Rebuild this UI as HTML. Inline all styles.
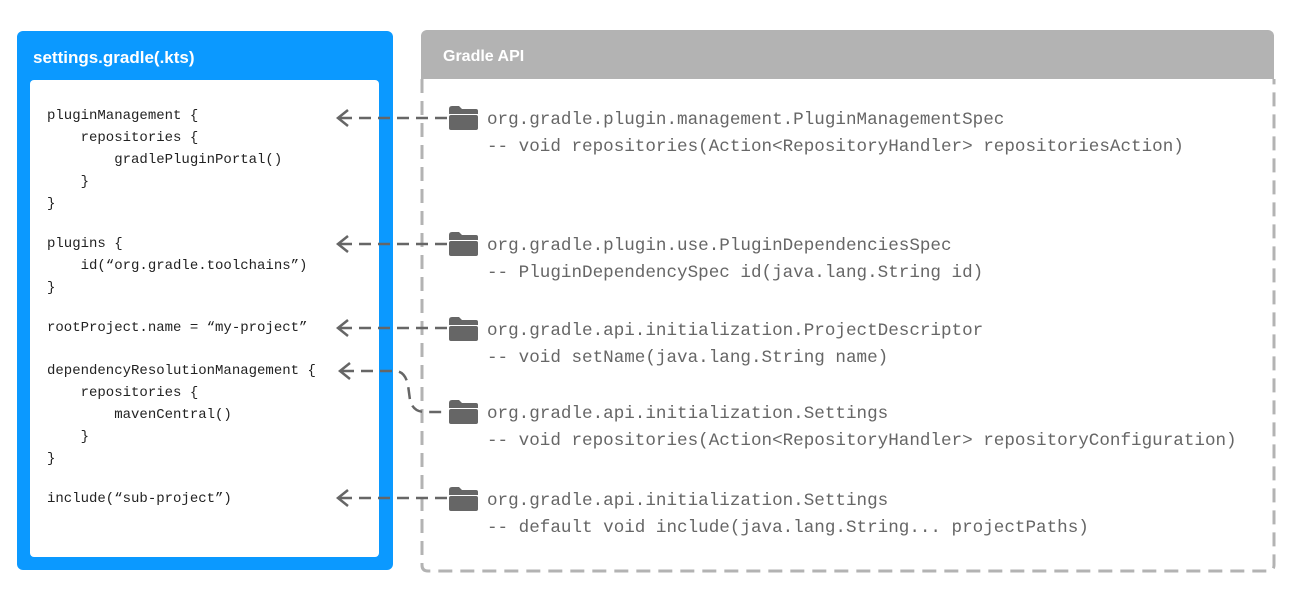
<!DOCTYPE html>
<html><head><meta charset="utf-8"><style>
body{margin:0;width:1290px;height:592px;background:#fff;position:relative;overflow:hidden;font-family:"Liberation Sans",sans-serif}
.blue{position:absolute;left:17px;top:31px;width:376px;height:539px;background:#0b99ff;border-radius:6px}
.blue h1{position:absolute;left:16px;top:17px;margin:0;font-size:17px;font-weight:bold;color:#fff}
.inner{position:absolute;left:30px;top:80px;width:349px;height:477px;background:#fff;border-radius:4px}
.hdr{position:absolute;left:421px;top:30px;width:853px;height:49px;background:#b3b3b3;border-radius:6px 6px 0 0}
.hdr span{position:absolute;left:22px;top:18px;font-size:16px;font-weight:bold;color:#fff}
.c{position:absolute;font-family:"Liberation Mono",monospace;font-size:14px;color:#222;white-space:pre;line-height:22px;letter-spacing:0}
.r{position:absolute;left:487px;font-family:"Liberation Mono",monospace;font-size:17.6px;color:#666;white-space:pre;line-height:27px}
</style></head><body>
<div class="blue"><h1>settings.gradle(.kts)</h1></div>
<div class="inner"></div>
<div class="hdr"><span>Gradle API</span></div>
<svg style="position:absolute;left:0;top:0" width="1290" height="592">
<path d="M422 79 V565 Q422 571 428 571 H1268 Q1274 571 1274 565 V79" fill="none" stroke="#b3b3b3" stroke-width="3" stroke-dasharray="14 8"/>
<g stroke="#666" stroke-width="2.5" fill="none" stroke-dasharray="12 7">
<path d="M340 118 H448"/><path d="M340 244 H448"/><path d="M340 328 H448"/><path d="M340 498 H448"/>
<path d="M342 371 H395 Q405 371 408 385 L410 400 Q413 412 425 412 H448"/>
</g>
<g stroke="#666" stroke-width="2.5" fill="none">
<path d="M348 110 L338 118 L348 126"/><path d="M348 236 L338 244 L348 252"/><path d="M348 320 L338 328 L348 336"/><path d="M350 363 L340 371 L350 379"/><path d="M348 490 L338 498 L348 506"/>
</g>
<g fill="#666">
<g transform="translate(449,106)"><path d="M0 3 Q0 0 3 0 H10 L13 3 H27 Q29 3 29 5 V8 H0Z"/><rect x="0" y="9" width="29" height="15" rx="2"/></g>
<g transform="translate(449,232)"><path d="M0 3 Q0 0 3 0 H10 L13 3 H27 Q29 3 29 5 V8 H0Z"/><rect x="0" y="9" width="29" height="15" rx="2"/></g>
<g transform="translate(449,317)"><path d="M0 3 Q0 0 3 0 H10 L13 3 H27 Q29 3 29 5 V8 H0Z"/><rect x="0" y="9" width="29" height="15" rx="2"/></g>
<g transform="translate(449,400)"><path d="M0 3 Q0 0 3 0 H10 L13 3 H27 Q29 3 29 5 V8 H0Z"/><rect x="0" y="9" width="29" height="15" rx="2"/></g>
<g transform="translate(449,487)"><path d="M0 3 Q0 0 3 0 H10 L13 3 H27 Q29 3 29 5 V8 H0Z"/><rect x="0" y="9" width="29" height="15" rx="2"/></g>
</g>
</svg>
<div class="c" style="left:47px;top:105px">pluginManagement {
    repositories {
        gradlePluginPortal()
    }
}</div>
<div class="c" style="left:47px;top:233px">plugins {
    id(“org.gradle.toolchains”)
}</div>
<div class="c" style="left:47px;top:317px">rootProject.name = “my-project”</div>
<div class="c" style="left:47px;top:360px">dependencyResolutionManagement {
    repositories {
        mavenCentral()
    }
}</div>
<div class="c" style="left:47px;top:488px">include(“sub-project”)</div>
<div class="r" style="top:107px">org.gradle.plugin.management.PluginManagementSpec
-- void repositories(Action&lt;RepositoryHandler&gt; repositoriesAction)</div>
<div class="r" style="top:233px">org.gradle.plugin.use.PluginDependenciesSpec
-- PluginDependencySpec id(java.lang.String id)</div>
<div class="r" style="top:318px">org.gradle.api.initialization.ProjectDescriptor
-- void setName(java.lang.String name)</div>
<div class="r" style="top:401px">org.gradle.api.initialization.Settings
-- void repositories(Action&lt;RepositoryHandler&gt; repositoryConfiguration)</div>
<div class="r" style="top:488px">org.gradle.api.initialization.Settings
-- default void include(java.lang.String... projectPaths)</div>
</body></html>
